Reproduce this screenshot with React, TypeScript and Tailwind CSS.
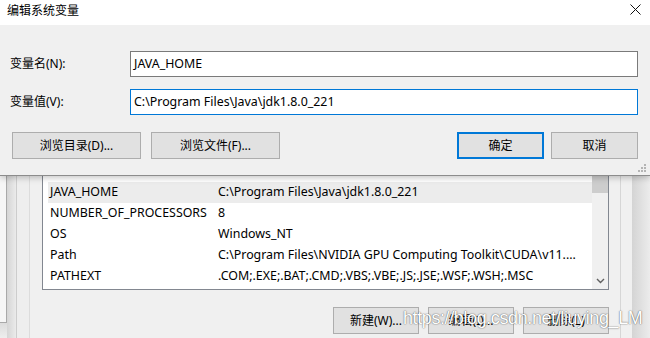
import React from "react";

const rows: [string, string, boolean][] = [
  ["INTEL_DEV_REDIST", "C:\\Program Files (x86)\\Common Files\\Intel\\Shared Libraries\\", false],
  ["JAVA_HOME", "C:\\Program Files\\Java\\jdk1.8.0_221", true],
  ["NUMBER_OF_PROCESSORS", "8", false],
  ["OS", "Windows_NT", false],
  ["Path", "C:\\Program Files\\NVIDIA GPU Computing Toolkit\\CUDA\\v11....", false],
  ["PATHEXT", ".COM;.EXE;.BAT;.CMD;.VBS;.VBE;.JS;.JSE;.WSF;.WSH;.MSC", false],
];

function Btn({ label, w, primary }: { label: string; w: string; primary?: boolean }) {
  return (
    <div
      className={
        "h-[27px] flex items-center justify-center bg-[#e1e1e1] text-[12px] leading-none text-black " +
        w +
        (primary ? " border-2 border-[#0078d7]" : " border border-[#adadad]")
      }
    >
      {label}
    </div>
  );
}

export default function App() {
  return (
    <div className="relative w-[650px] h-[338px] overflow-hidden bg-[#f0f0f0] font-['Noto_Sans','Noto_Sans_CJK_SC',sans-serif] text-black">
      {/* Edit dialog */}
      <div className="relative z-10 h-[176px] bg-[#f0f0f0] border-b border-[#8c8c8c] shadow-[0_2px_6px_rgba(0,0,0,0.22)]">
        <div className="h-[25px] bg-white flex items-start justify-between pl-[7px] pr-[9px]">
          <span className="pt-[4px] text-[12px] leading-[13px]">编辑系统变量</span>
          <svg width="11" height="11" viewBox="0 0 11 11" className="mt-[4px]">
            <path d="M0.5 0.5 L10.5 10.5 M10.5 0.5 L0.5 10.5" stroke="#111" strokeWidth="1" fill="none" />
          </svg>
        </div>
        <div className="pt-[26px] pl-[10px] pr-[12px]">
          <div className="flex items-center h-[26px]">
            <span className="w-[120px] text-[12px] leading-none">变量名(N):</span>
            <div className="flex-1 h-[26px] border border-[#7a7a7a] bg-white flex items-center pl-[3px] text-[12.4px] leading-none">
              JAVA_HOME
            </div>
          </div>
          <div className="flex items-center h-[26px] mt-[12px]">
            <span className="w-[120px] text-[12px] leading-none">变量值(V):</span>
            <div className="flex-1 h-[26px] border border-[#0078d7] bg-white flex items-center pl-[3px] text-[12.4px] leading-none">
              C:\Program Files\Java\jdk1.8.0_221
            </div>
          </div>
          <div className="flex justify-between mt-[17px] pl-[2px]">
            <div className="flex gap-[10px]">
              <Btn label="浏览目录(D)..." w="w-[129px]" />
              <Btn label="浏览文件(F)..." w="w-[129px]" />
            </div>
            <div className="flex gap-[7px]">
              <Btn label="确定" w="w-[87px]" primary />
              <Btn label="取消" w="w-[87px]" />
            </div>
          </div>
        </div>
        <svg width="9" height="9" viewBox="0 0 9 9" className="absolute right-[3px] bottom-[2px]">
          <g fill="#b4b4b4">
            <rect x="6" y="0" width="2" height="2" />
            <rect x="3" y="3" width="2" height="2" />
            <rect x="6" y="3" width="2" height="2" />
            <rect x="0" y="6" width="2" height="2" />
            <rect x="3" y="6" width="2" height="2" />
            <rect x="6" y="6" width="2" height="2" />
          </g>
        </svg>
      </div>

      {/* Background environment variables window */}
      <div className="flex h-[162px] bg-[#f0f0f0]">
        <div className="w-[42px] flex">
          <div className="w-[7px] flex flex-col">
            <div className="h-[147px] bg-[#f6f6f6] border-r border-b border-[#a9a9a9]" />
            <div className="flex-1 bg-gradient-to-b from-[#dcdcdc] to-[#eeeeee]" />
          </div>
          <div className="w-[9px] bg-gradient-to-r from-[#d5d5d5] to-[#ebebeb]" />
          <div className="w-[1px] bg-[#cdcdcd]" />
          <div className="w-[12px] bg-[#eeeeee]" />
          <div className="w-[1px] bg-[#dcdcdc]" />
          <div className="flex-1" />
        </div>

        <div className="w-[567px] flex flex-col">
          <div className="h-[114px] border-x border-b border-[#828790] bg-white flex">
            <div className="flex-1 overflow-hidden pl-[5px]">
              <div className="mt-[-15px]">
                {rows.map(([k, v, sel], i) => (
                  <div
                    key={k}
                    className={
                      "h-[21px] flex items-center pl-[2px] text-[12.4px] leading-none whitespace-nowrap " +
                      (sel ? "bg-[#ececec] " : "") +
                      (i === 0 ? "pb-[5px]" : "")
                    }
                  >
                    <span className="w-[168px]">{k}</span>
                    <span>{v}</span>
                  </div>
                ))}
              </div>
            </div>
            <div className="w-[16px] bg-[#f0f0f0] flex flex-col">
              <div className="h-[17px] bg-[#cdcdcd]" />
              <div className="flex-1" />
              <div className="h-[17px] flex items-center justify-center">
                <svg width="9" height="6" viewBox="0 0 9 6">
                  <path d="M1 1 L4.5 4.5 L8 1" stroke="#606060" strokeWidth="1.4" fill="none" />
                </svg>
              </div>
            </div>
          </div>
          <div className="flex justify-end gap-[9px] mt-[17px]">
            <Btn label="新建(W)..." w="w-[86px]" />
            <Btn label="编辑(I)..." w="w-[86px]" />
            <Btn label="删除(L)" w="w-[86px]" />
          </div>
        </div>

        <div className="w-[41px] flex">
          <div className="w-[11px]" />
          <div className="w-[1px] bg-[#d6d6d6]" />
          <div className="w-[11px]" />
          <div className="flex-1 bg-gradient-to-r from-[#d4d4d4] to-[#ececec]" />
        </div>
      </div>

      {/* watermark */}
      <div className="absolute left-[403px] top-[309px] text-[18px] leading-none tracking-[-0.4px] font-['Liberation_Sans',sans-serif] text-white [text-shadow:0_0_1.5px_rgba(0,0,0,0.55),0_0_1px_rgba(0,0,0,0.35)] whitespace-nowrap">
        https://blog.csdn.net/liuying_LM
      </div>
    </div>
  );
}
